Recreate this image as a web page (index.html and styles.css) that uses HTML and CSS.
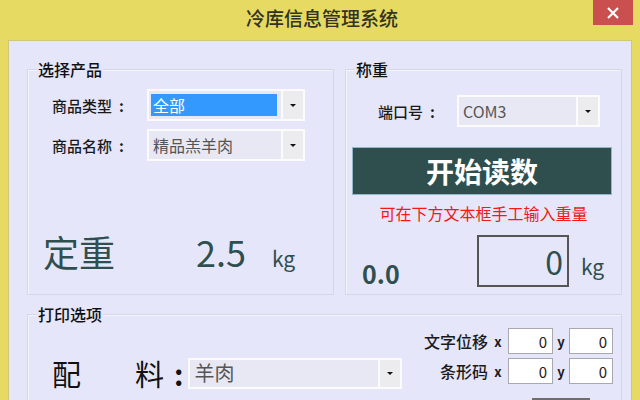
FILE: index.html
```html
<!DOCTYPE html>
<html lang="zh-CN">
<head>
    <meta charset="UTF-8">
    <title>冷库信息管理系统</title>
    <link rel="stylesheet" href="styles.css">
</head>
<body>
    <div class="window">
        <header class="titlebar">
            <span></span>
            <h1 class="title">冷库信息管理系统</h1>
            <button class="close" type="button">
                <svg width="12" height="12" viewBox="0 0 12 12"><path d="M1 1L11 11M11 1L1 11" stroke="#fff" stroke-width="2.2" fill="none"/></svg>
            </button>
        </header>
        <main class="client">
            <div class="top-row">
                <section class="group product">
                    <div class="group-title">选择产品</div>
                    <div class="fields">
                        <label>商品类型<span class="colon-c">:</span></label>
                        <div class="combo focused"><span class="value">全部</span><span class="arrow"><i></i></span></div>
                        <label>商品名称<span class="colon-c">:</span></label>
                        <div class="combo"><span class="value">精品羔羊肉</span><span class="arrow"><i></i></span></div>
                    </div>
                    <div class="fixed-weight">
                        <span class="big-label">定重</span>
                        <span class="big-value">2.5</span>
                        <span class="unit">kg</span>
                    </div>
                </section>
                <section class="group scale">
                    <div class="group-title">称重</div>
                    <div class="port-row">
                        <label>端口号<span class="colon-c">:</span></label>
                        <div class="combo port"><span class="value">COM3</span><span class="arrow"><i></i></span></div>
                    </div>
                    <button class="read-btn" type="button">开始读数</button>
                    <p class="hint">可在下方文本框手工输入重量</p>
                    <div class="reading-row">
                        <span class="reading">0.0</span>
                        <input class="weight-input" type="text" value="0">
                        <span class="unit">kg</span>
                    </div>
                </section>
            </div>
            <section class="group print">
                <div class="group-title">打印选项</div>
                <div class="print-body">
                    <div class="mix-row">
                        <span class="mix-first">配</span>
                        <span class="mix-second">料</span>
                        <span class="colon">:</span>
                        <div class="combo mix"><span class="value">羊肉</span><span class="arrow"><i></i></span></div>
                    </div>
                    <div class="offsets">
                        <div class="offset-grid">
                            <label>文字位移</label>
                            <span class="axis">x</span>
                            <input class="small-input" type="text" value="0">
                            <span class="axis">y</span>
                            <input class="small-input" type="text" value="0">
                            <label>条形码</label>
                            <span class="axis">x</span>
                            <input class="small-input" type="text" value="0">
                            <span class="axis">y</span>
                            <input class="small-input" type="text" value="0">
                        </div>
                        <button class="print-btn" type="button"></button>
                    </div>
                </div>
            </section>
        </main>
    </div>
</body>
</html>
```

FILE: styles.css
```css
body {
    margin: 0;
    width: 640px;
    height: 400px;
    overflow: hidden;
    background: #e6da62;
    font-family: "Noto Sans CJK SC", "Noto Sans", sans-serif;
    color: #1a1a1a;
}

.window {
    height: 400px;
}

.titlebar {
    display: grid;
    grid-template-columns: 1fr auto 1fr;
    height: 40px;
}

.title {
    margin: 0;
    font-size: 19px;
    font-weight: 500;
    line-height: 36px;
    color: #333322;
    padding-left: 4px;
}

.close {
    justify-self: end;
    width: 40px;
    height: 25px;
    margin-right: 7px;
    border: none;
    padding: 0;
    background: #c9504f;
    display: flex;
    align-items: center;
    justify-content: center;
}

.client {
    margin: 0 8px;
    height: 360px;
    box-sizing: border-box;
    border: 1px solid #cfc67a;
    border-bottom: none;
    background: #e6e6fa;
    padding: 28px 9px 0 18px;
}

.top-row {
    display: flex;
    gap: 11px;
}

.group {
    box-sizing: border-box;
    border: 1px solid #d6d6ea;
    box-shadow: inset 1px 1px 0 #f4f4fc;
}

.group-title {
    width: fit-content;
    margin: -11px 0 0 9px;
    padding: 0 1px;
    height: 20px;
    line-height: 20px;
    font-size: 16px;
    font-weight: 500;
    background: #e6e6fa;
    color: #111;
}

label {
    font-weight: 500;
}

.colon-c {
    margin-left: 7px;
    font-weight: bold;
}

.product {
    width: 307px;
    height: 226px;
}

.scale {
    width: 277px;
    height: 226px;
}

.fields {
    display: grid;
    grid-template-columns: 95px 158px;
    row-gap: 8px;
    align-items: center;
    margin-top: 10px;
    padding-left: 24px;
    font-size: 15px;
}

.combo {
    display: flex;
    box-sizing: border-box;
    height: 32px;
    border: 2px solid #fbfbfe;
    background: #e8e8f4;
}

.combo .value {
    flex: 1;
    padding-left: 4px;
    font-size: 16px;
    line-height: 28px;
    color: #555;
}

.combo.focused .value {
    margin: 3px 4px 3px 2px;
    padding-left: 2px;
    line-height: 22px;
    background: #3399ff;
    color: #fff;
}

.combo .arrow {
    width: 20px;
    border-left: 2px solid #fbfbfe;
    background: #ececee;
    display: flex;
    align-items: center;
    justify-content: center;
}

.combo .arrow i {
    width: 0;
    height: 0;
    border-left: 3px solid transparent;
    border-right: 3px solid transparent;
    border-top: 3px solid #111;
}

.fixed-weight {
    display: flex;
    align-items: baseline;
    margin-top: 64px;
    padding-left: 15px;
    color: #2f4f4f;
}

.big-label {
    width: 153px;
    font-size: 36px;
}

.big-value {
    width: 76px;
    font-size: 36px;
}

.unit {
    font-size: 21px;
    color: #2f4f4f;
}

.port-row {
    display: flex;
    align-items: center;
    margin-top: 16px;
    padding-left: 32px;
    font-size: 15px;
}

.port-row label {
    width: 79px;
}

.combo.port {
    width: 143px;
}

.read-btn {
    display: block;
    width: 260px;
    height: 48px;
    margin: 20px 0 0 6px;
    border: 1px solid #8fb8c8;
    background: #2f4f4f;
    color: #fff;
    font-family: inherit;
    font-size: 28px;
    font-weight: bold;
    line-height: 44px;
}

.hint {
    margin: 8px 0 0 0;
    text-align: center;
    font-size: 16px;
    line-height: 20px;
    color: #f01818;
}

.reading-row {
    display: flex;
    align-items: baseline;
    margin-top: 12px;
    padding-left: 16px;
}

.reading {
    align-self: flex-end;
    width: 115px;
    margin-bottom: -4px;
    font-size: 25px;
    font-weight: bold;
    color: #2f4f4f;
}

.weight-input {
    box-sizing: border-box;
    width: 92px;
    height: 52px;
    border: 2px solid #555;
    background: #e6e6fa;
    padding: 0 4px 0 0;
    text-align: right;
    font-family: inherit;
    font-size: 32px;
    color: #2f4f4f;
}

.reading-row .unit {
    margin-left: 12px;
}

.print {
    width: 595px;
    height: 100px;
    margin-top: 19px;
}

.print-body {
    display: flex;
    align-items: flex-start;
}

.mix-row {
    display: flex;
    align-items: center;
    margin-top: 34px;
    padding-left: 24px;
    font-size: 29px;
    line-height: 31px;
    color: #111;
}

.mix-first {
    width: 83px;
}

.colon {
    margin-left: 10px;
    font-weight: bold;
}

.combo.mix {
    width: 214px;
    height: 31px;
    margin-left: 5px;
}

.combo.mix .value {
    font-size: 20px;
    line-height: 26px;
}

.offsets {
    margin: 4px 8px 0 auto;
}

.offset-grid {
    display: grid;
    grid-template-columns: auto 20px 45px 16px 44px;
    grid-auto-rows: 26px;
    row-gap: 4px;
    align-items: center;
    font-size: 16px;
}

.offset-grid label {
    text-align: right;
}

.axis {
    text-align: center;
    font-size: 13px;
    font-weight: bold;
}

.small-input {
    box-sizing: border-box;
    width: 100%;
    height: 26px;
    border: 1px solid #a8a8b0;
    background: #fff;
    padding: 0 5px 0 0;
    text-align: right;
    font-family: inherit;
    font-size: 15px;
    color: #222;
}

.print-btn {
    display: block;
    width: 58px;
    height: 30px;
    margin: 14px 0 0 108px;
    border: 2px solid #6e6e6e;
    background: #dcdcdc;
}
```
